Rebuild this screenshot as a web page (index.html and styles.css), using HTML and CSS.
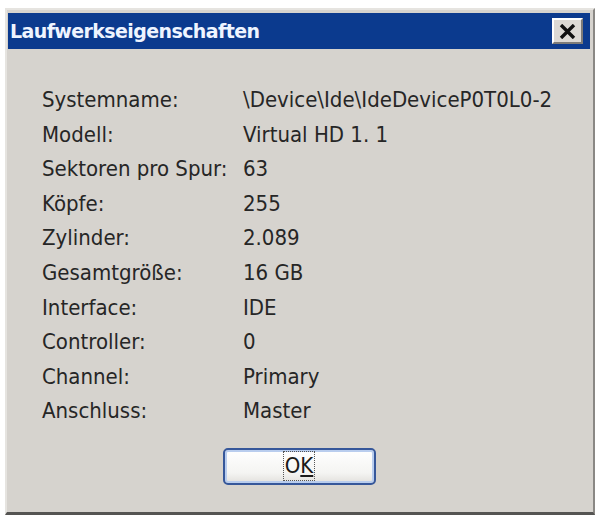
FILE: index.html
```html
<!DOCTYPE html>
<html lang="de">
<head>
<meta charset="utf-8">
<title>Laufwerkseigenschaften</title>
<link rel="stylesheet" href="styles.css">
</head>
<body>
<div class="dialog">
  <div class="titlebar">
    <span class="title">Laufwerkseigenschaften</span>
    <span class="close">
      <svg width="17" height="15" viewBox="0 0 17 15"><path d="M2 1 L15 14 M15 1 L2 14" stroke="#111" stroke-width="3.4" fill="none"/></svg>
    </span>
  </div>
  <div class="content">
    <div class="props">
      <span>Systemname:</span><span>\Device\Ide\IdeDeviceP0T0L0-2</span>
      <span>Modell:</span><span>Virtual HD 1. 1</span>
      <span>Sektoren pro Spur:</span><span>63</span>
      <span>Köpfe:</span><span>255</span>
      <span>Zylinder:</span><span>2.089</span>
      <span>Gesamtgröße:</span><span>16 GB</span>
      <span>Interface:</span><span>IDE</span>
      <span>Controller:</span><span>0</span>
      <span>Channel:</span><span>Primary</span>
      <span>Anschluss:</span><span>Master</span>
    </div>
    <div class="buttons">
      <button class="ok"><span class="focus">O<u>K</u></span></button>
    </div>
  </div>
</div>
</body>
</html>
```

FILE: styles.css
```css
html, body {
  margin: 0;
  padding: 0;
  background: #ffffff;
}
body {
  width: 595px;
  height: 515px;
  overflow: hidden;
}
.dialog {
  box-sizing: border-box;
  margin: 8px 0 0 5px;
  width: 590px;
  height: 507px;
  background: #d6d3ce;
  border-top: 2px solid #e6e4e0;
  border-left: 2px solid #e6e4e0;
  border-right: 2px solid #8a8884;
  border-bottom: 3px solid #555452;
  padding: 3px 3px 0 1px;
  display: flex;
  flex-direction: column;
}
.titlebar {
  height: 36px;
  background: #0b3a8e;
  display: flex;
  align-items: center;
  justify-content: space-between;
  padding: 0 7px 0 2px;
}
.title {
  font-family: "DejaVu Sans", sans-serif;
  font-weight: bold;
  font-size: 19px;
  color: #eef4ff;
  letter-spacing: -0.6px;
}
.close {
  box-sizing: border-box;
  width: 31px;
  height: 26px;
  background: #dcd9d4;
  border-top: 2px solid #ffffff;
  border-left: 2px solid #ffffff;
  border-right: 2px solid #7d7b78;
  border-bottom: 2px solid #7d7b78;
  display: flex;
  align-items: center;
  justify-content: center;
}
.content {
  flex: 1;
  padding: 34px 0 0 34px;
  font-family: "DejaVu Sans Condensed", "DejaVu Sans", sans-serif;
  font-size: 22px;
  color: #262626;
}
.props {
  display: grid;
  grid-template-columns: 201px auto;
  line-height: 34.6px;
}
.buttons {
  display: flex;
  justify-content: center;
  margin-top: 19px;
  padding-right: 34px;
}
.ok {
  box-sizing: border-box;
  width: 153px;
  height: 37px;
  border: 2px solid #36579a;
  border-radius: 5px;
  background: linear-gradient(#ffffff, #f4f4f2 70%, #e2e0dc);
  box-shadow: inset 0 0 0 2px #b9cdee;
  font-family: "DejaVu Sans Condensed", "DejaVu Sans", sans-serif;
  font-size: 22px;
  color: #1a1a1a;
  padding: 0;
  display: flex;
  align-items: center;
  justify-content: center;
}
.focus {
  border: 1px dotted #555;
  padding: 0 1px;
  line-height: 28px;
}
```
